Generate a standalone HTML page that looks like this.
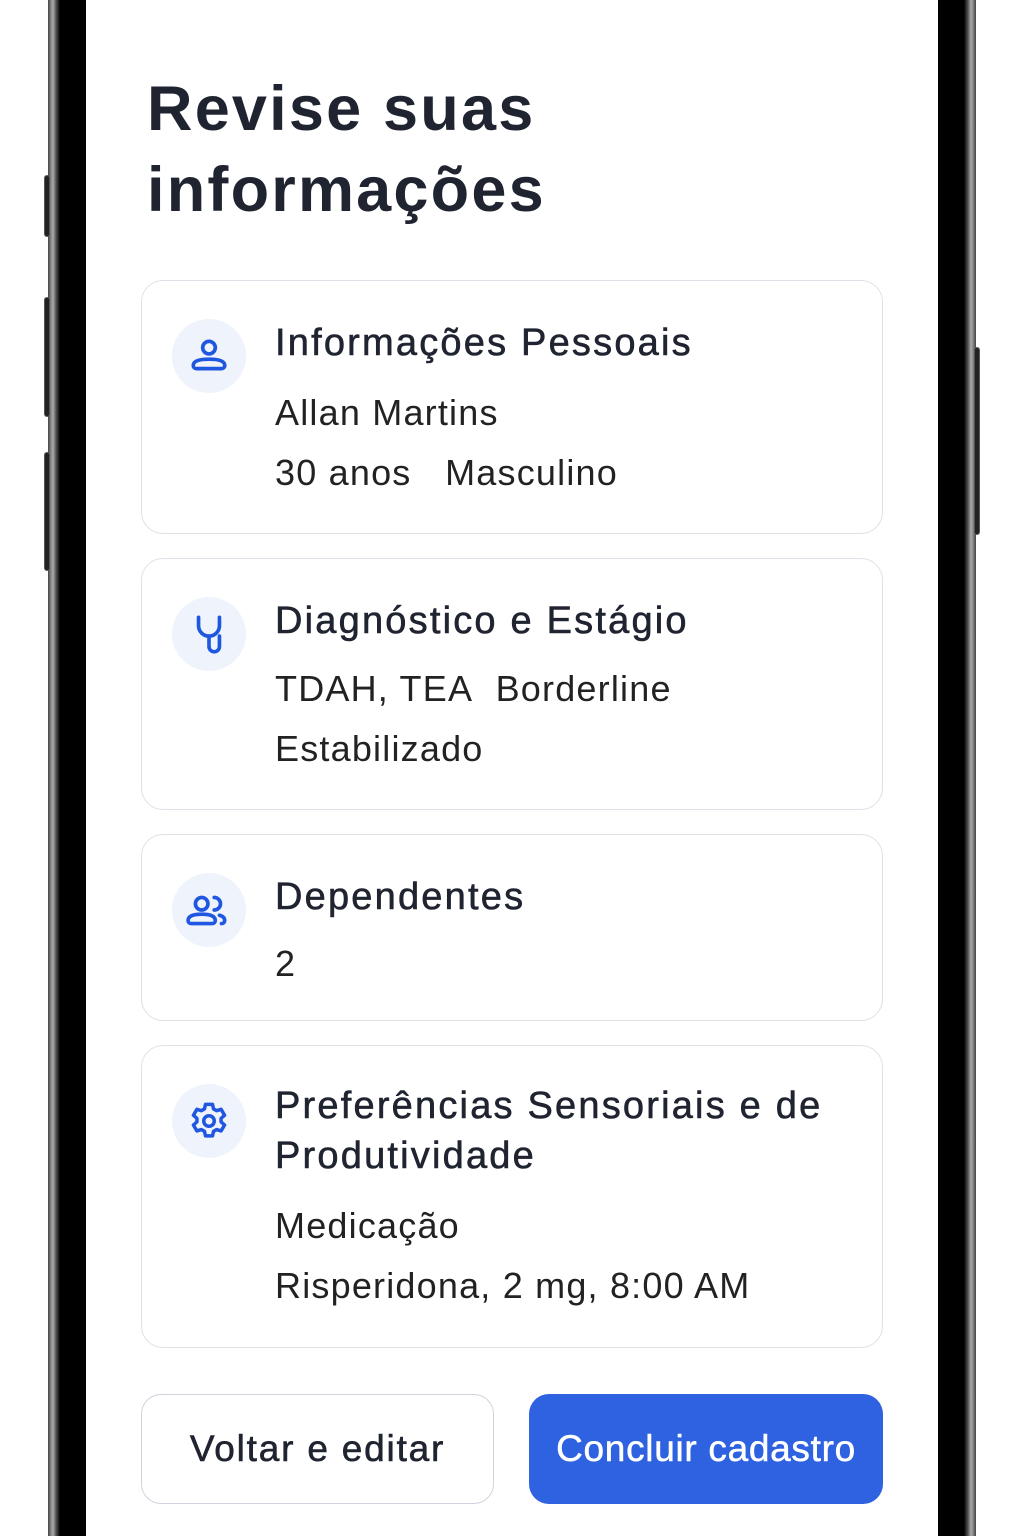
<!DOCTYPE html>
<html><head><meta charset="utf-8"><style>
*{margin:0;padding:0;box-sizing:border-box}
body{width:1024px;height:1536px;background:#fff;position:relative;overflow:hidden;font-family:"Liberation Sans",sans-serif;color:#1f2430}
.fr{position:absolute;top:0;height:1536px;background:#000}
.btn{position:absolute;background:#222;border:1px solid #555;border-radius:3px}
.card{position:absolute;left:141px;width:742px;border:1.5px solid #dde1e8;border-radius:22px;background:#fff}
.ic{position:absolute;left:30px;width:74px;height:74px;border-radius:50%;background:#eef3fc;display:flex;align-items:center;justify-content:center}
.t{position:absolute;left:133px;font-size:38px;letter-spacing:2.2px;-webkit-text-stroke:0.6px #1f2430;line-height:50px}
.v{position:absolute;left:133px;font-size:36px;letter-spacing:1.2px;line-height:44px;color:#222}
</style></head><body>
<div class="fr" style="left:48px;width:38px;background:linear-gradient(90deg,#444 0,#888 3px,#aaa 5px,#555 8px,#000 12px,#000 100%)"></div>
<div class="fr" style="left:938px;width:38px;background:linear-gradient(270deg,#444 0,#888 3px,#aaa 5px,#555 8px,#000 12px,#000 100%)"></div>
<div class="btn" style="left:44px;top:175px;width:6px;height:62px"></div>
<div class="btn" style="left:44px;top:297px;width:6px;height:120px"></div>
<div class="btn" style="left:44px;top:452px;width:6px;height:119px"></div>
<div class="btn" style="left:974px;top:347px;width:6px;height:188px"></div>

<div style="position:absolute;left:147px;top:69px;font-size:63px;letter-spacing:2.2px;font-weight:bold;line-height:81px;color:#1f2430">Revise suas<br>informações</div>

<div class="card" style="top:280px;height:254px">
 <div class="ic" style="top:38px"><svg width="42" height="42" viewBox="0 0 40 40" fill="none" stroke="#1f57e0" stroke-width="3.5"><circle cx="20" cy="12" r="6"/><path d="M8 32a3 3 0 0 1-3-3c0-4 5-6 15-6s15 2 15 6a3 3 0 0 1-3 3z"/></svg></div>
 <div class="t" style="top:37px">Informações Pessoais</div>
 <div class="v" style="top:110px">Allan Martins</div>
 <div class="v" style="top:170px">30 anos&nbsp;&nbsp;&nbsp;Masculino</div>
</div>
<div class="card" style="top:558px;height:252px">
 <div class="ic" style="top:38px"><svg width="42" height="46" viewBox="0 0 40 44" fill="none" stroke="#1f57e0" stroke-width="3.5" stroke-linecap="round"><path d="M10 6v8a10 10 0 0 0 20 0V6"/><path d="M20 24v10a5 5 0 0 0 10 0v-10"/></svg></div>
 <div class="t" style="top:37px">Diagnóstico e Estágio</div>
 <div class="v" style="top:108px">TDAH, TEA&nbsp; Borderline</div>
 <div class="v" style="top:168px">Estabilizado</div>
</div>
<div class="card" style="top:834px;height:187px">
 <div class="ic" style="top:38px"><svg width="46" height="42" viewBox="0 0 44 40" fill="none" stroke="#1f57e0" stroke-width="3.5" stroke-linecap="round"><circle cx="15" cy="14" r="6"/><path d="M5 33a3 3 0 0 1-3-3c0-4 5-6 13-6s13 2 13 6a3 3 0 0 1-3 3z"/><path d="M27 8a6 6 0 0 1 0 12"/><path d="M32 25c4 1 5 3 5 5a3 3 0 0 1-3 3"/></svg></div>
 <div class="t" style="top:37px">Dependentes</div>
 <div class="v" style="top:107px">2</div>
</div>
<div class="card" style="top:1045px;height:303px">
 <div class="ic" style="top:38px"><svg width="42" height="42" viewBox="0 0 24 24" fill="none" stroke="#1f57e0" stroke-width="2" stroke-linejoin="round"><path d="M10 2.5h4l.6 2.6 1.8 1 2.5-.8 2 3.4-2 1.8v2l2 1.8-2 3.4-2.5-.8-1.8 1-.6 2.6h-4l-.6-2.6-1.8-1-2.5.8-2-3.4 2-1.8v-2l-2-1.8 2-3.4 2.5.8 1.8-1z"/><circle cx="12" cy="12" r="3"/></svg></div>
 <div class="t" style="top:35px">Preferências Sensoriais e de<br>Produtividade</div>
 <div class="v" style="top:158px">Medicação</div>
 <div class="v" style="top:218px">Risperidona, 2 mg, 8:00 AM</div>
</div>

<div style="position:absolute;left:141px;top:1394px;width:353px;height:110px;border:1.5px solid #cfd4dc;border-radius:20px;display:flex;align-items:center;justify-content:center;font-size:37px;letter-spacing:1.8px;-webkit-text-stroke:0.6px #1f2430">Voltar e editar</div>
<div style="position:absolute;left:529px;top:1394px;width:354px;height:110px;background:#2f62e0;border-radius:20px;display:flex;align-items:center;justify-content:center;font-size:37px;letter-spacing:0.7px;color:#fff;-webkit-text-stroke:0.5px #fff">Concluir cadastro</div>
</body></html>
